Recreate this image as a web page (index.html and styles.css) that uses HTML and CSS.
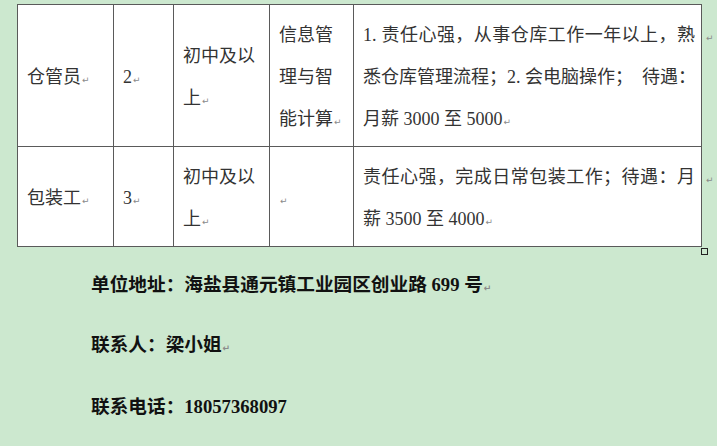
FILE: index.html
```html
<!DOCTYPE html>
<html lang="zh-CN">
<head>
<meta charset="utf-8">
<title>招聘岗位</title>
<link rel="stylesheet" href="styles.css">
</head>
<body>
<div class="page">
  <table class="jobs">
    <colgroup>
      <col class="c1"><col class="c2"><col class="c3"><col class="c4"><col class="c5"><col class="c6">
    </colgroup>
    <tr class="r1">
      <td>仓管员<span class="rm">↵</span></td>
      <td><span class="lat">2</span><span class="rm">↵</span></td>
      <td>初中及以<br>上<span class="rm">↵</span></td>
      <td>信息管<br>理与智<br>能计算<span class="rm">↵</span></td>
      <td class="desc"><span class="jl"><span class="lat">1. </span>责任心强，从事仓库工作一年以上，熟</span><span class="jl">悉仓库管理流程；<span class="lat">2. </span>会电脑操作；<span class="lat">&nbsp;&nbsp;</span>待遇：</span><span class="ln">月薪<span class="lat"> 3000 </span>至<span class="lat"> 5000</span><span class="rm">↵</span></span></td>
      <td class="end"><span class="rm">↵</span></td>
    </tr>
    <tr class="r2">
      <td>包装工<span class="rm">↵</span></td>
      <td><span class="lat">3</span><span class="rm">↵</span></td>
      <td>初中及以<br>上<span class="rm">↵</span></td>
      <td><span class="rm">↵</span></td>
      <td class="desc"><span class="jl">责任心强，完成日常包装工作；待遇：月</span><span class="ln">薪<span class="lat"> 3500 </span>至<span class="lat"> 4000</span><span class="rm">↵</span></span></td>
      <td class="end"><span class="rm">↵</span></td>
    </tr>
  </table>
  <div class="handle"></div>
  <div class="contact">
    <p>单位地址：海盐县通元镇工业园区创业路<span class="lat"> 699 </span>号<span class="rm">↵</span></p>
    <p>联系人：梁小姐<span class="rm">↵</span></p>
    <p class="tel">联系电话：<span class="lat">18057368097</span></p>
  </div>
</div>
</body>
</html>
```

FILE: styles.css
```css
html, body {
  margin: 0;
  padding: 0;
  background: #cce8cf;
}

body {
  width: 717px;
  height: 446px;
  overflow: hidden;
}

.page {
  padding: 4px 0 0 17px;
}

.jobs {
  border-collapse: collapse;
  table-layout: fixed;
  width: 699px;
  font-family: "Noto Sans CJK SC", sans-serif;
  font-size: 18px;
  color: #333;
}

.c1 { width: 96px; }
.c2 { width: 60px; }
.c3 { width: 96px; }
.c4 { width: 84px; }
.c5 { width: 348px; }
.c6 { width: 14px; }

.jobs td {
  border: 1px solid #5a5a5a;
  background: #fff;
  padding: 7px 6px 8px 9px;
  line-height: 42px;
  vertical-align: middle;
  white-space: nowrap;
  overflow: hidden;
}

.jobs td.end {
  border: none;
  background: transparent;
  vertical-align: top;
  padding: 7px 0 0 3px;
}

.lat {
  font-family: "Liberation Serif", serif;
  line-height: 1;
}

.jl {
  display: block;
  text-align: justify;
  text-align-last: justify;
}

.ln {
  display: block;
}

.rm {
  font-family: "DejaVu Sans", sans-serif;
  font-size: 9px;
  line-height: 1;
  color: #8a8a8a;
  margin-left: 1px;
}

.handle {
  width: 5px;
  height: 5px;
  border: 1px solid #222;
  margin: 1px 0 0 684px;
}

.contact {
  margin-top: -2px;
  padding-left: 74px;
  font-family: "Noto Sans CJK SC", sans-serif;
  font-size: 18.67px;
  font-weight: 700;
  color: #111;
}

.contact p {
  margin: 0;
  line-height: 60px;
}

.contact p.tel {
  margin-top: 2px;
}
```
